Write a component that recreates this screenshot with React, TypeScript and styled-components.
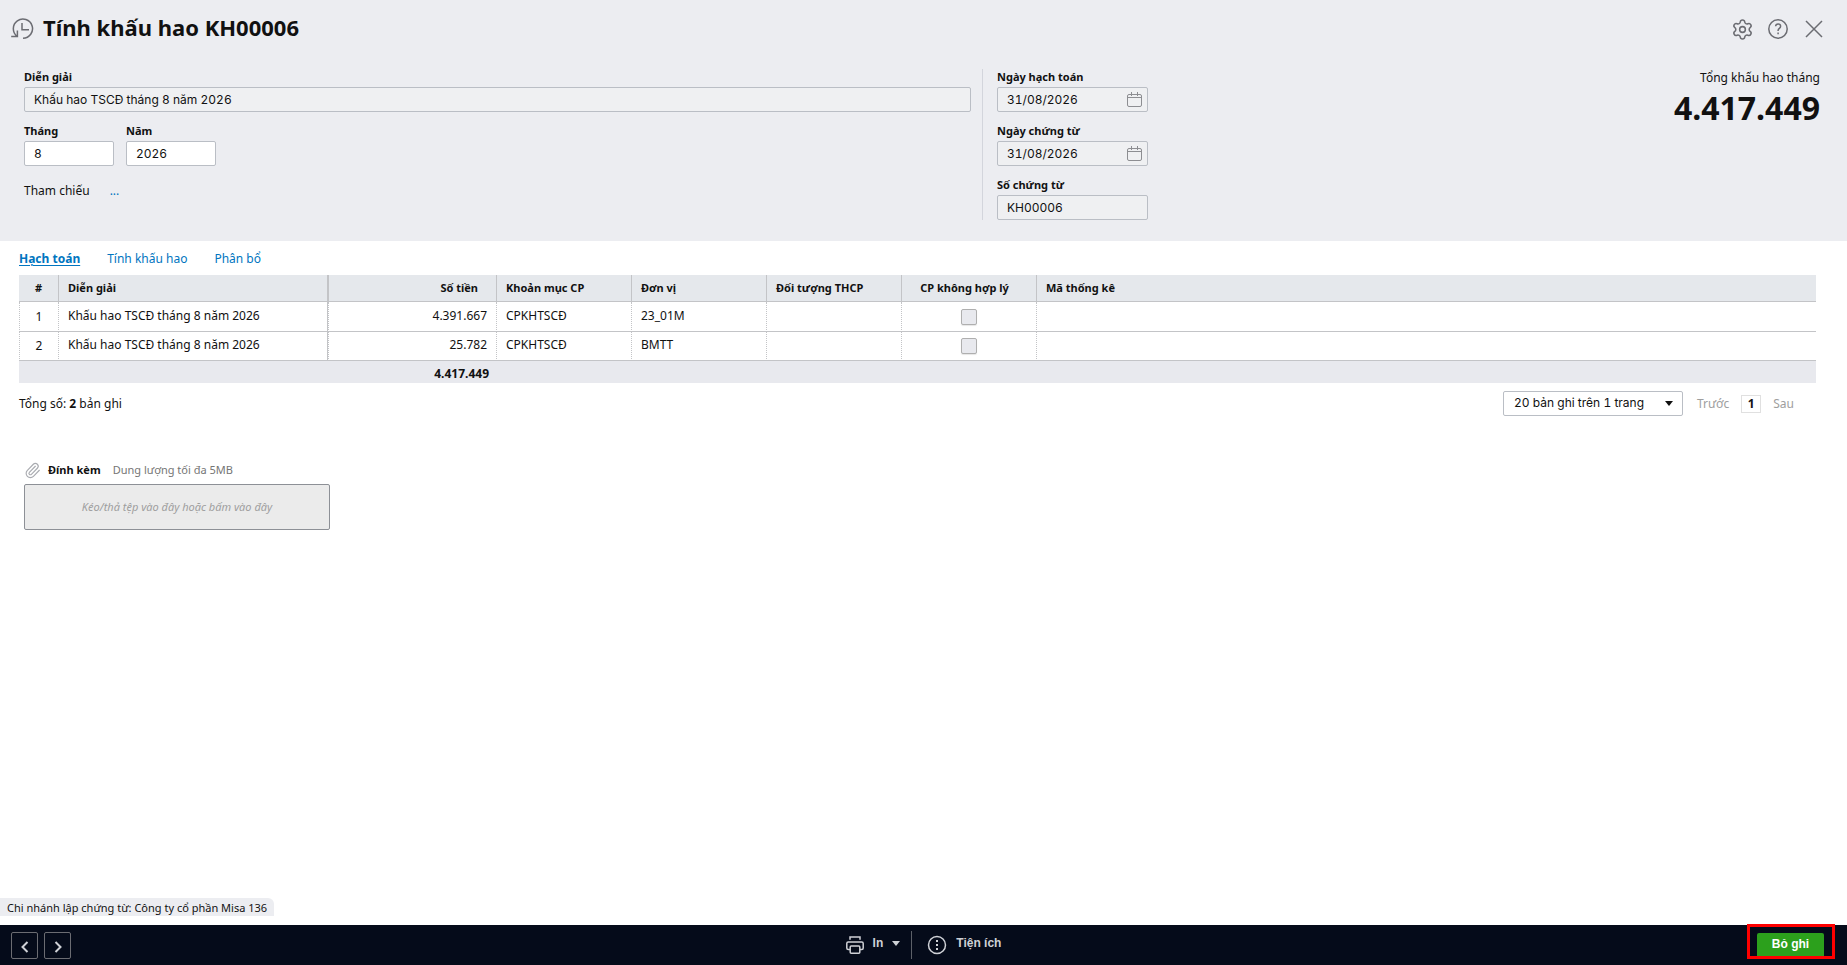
import React from 'react';
import styled, { createGlobalStyle } from 'styled-components';
import { Paperclip, Settings } from 'lucide-react';

const uiFont = '"Noto Sans", sans-serif';
const fieldFont = 'Inter, sans-serif';
const actionFont = '"Liberation Sans", Arial, sans-serif';

const GlobalStyle = createGlobalStyle`
  * { box-sizing: border-box; }
  body { margin: 0; background: #fff; color: #111; font: 12px/16px ${uiFont}; }
  button, input, select { font: inherit; color: inherit; margin: 0; }
  a { color: #0075c0; text-decoration: none; }
`;

const Page = styled.div`
  min-height: 100vh;
  display: flex;
  flex-direction: column;
`;

const Header = styled.header`
  background: #ecedf1;
  padding: 12px 24px 21px 10px;
`;

const TitleBar = styled.div`
  display: flex;
  align-items: center;
  gap: 9px;
  height: 34px;
`;

const Title = styled.h1`
  flex: 1;
  margin: 0 0 4px;
  font-size: 22px;
  line-height: 30px;
  font-weight: 700;
`;

const IconButton = styled.button`
  display: flex;
  align-items: center;
  justify-content: center;
  width: 24px;
  height: 24px;
  padding: 0;
  border: 0;
  background: none;
  color: #6b6c72;
`;

const HeaderActions = styled.div`
  display: flex;
  gap: 12px;
  margin-right: -3px;
`;

const FormArea = styled.div`
  display: flex;
  align-items: stretch;
  margin-top: 23px;
  padding-left: 14px;
`;

const MainFields = styled.div`
  flex: 0 1 947px;
  display: flex;
  flex-direction: column;
  gap: 11px;
`;

const SideFields = styled.div`
  flex: 0 0 166px;
  margin-left: 11px;
  padding-left: 14px;
  border-left: 1px solid #d3d5dc;
  display: flex;
  flex-direction: column;
  gap: 11px;
`;

const FieldRow = styled.div`
  display: flex;
  gap: 12px;
`;

const Field = styled.div<{ $width?: number }>`
  display: flex;
  flex-direction: column;
  width: ${(p) => (p.$width ? `${p.$width}px` : '100%')};
`;

const Label = styled.label`
  padding-bottom: 2px;
  font-size: 11px;
  line-height: 16px;
  font-weight: 700;
`;

const TextInput = styled.input`
  width: 100%;
  height: 25px;
  padding: 0 9px 1px;
  border: 1px solid #babec5;
  border-radius: 2px;
  background: #fff;
  font-family: ${fieldFont};
  font-variant-numeric: tabular-nums;
  outline: 0;

  &:read-only {
    background: #eff0f2;
  }
`;

const DateBox = styled.div`
  position: relative;

  svg {
    position: absolute;
    right: 5px;
    top: 4px;
  }
`;

const ReferenceLine = styled.div`
  display: flex;
  gap: 20px;
  margin-top: 6px;
`;

const Summary = styled.div`
  flex: 1;
  padding: 1px 3px 0 0;
  text-align: right;
`;

const SummaryValue = styled.div`
  margin-top: 6px;
  font-size: 32px;
  line-height: 32px;
  font-weight: 700;
`;

const Content = styled.main`
  flex: 1;
  display: flex;
  flex-direction: column;
  padding: 10px 31px 0 19px;
`;

const Tabs = styled.nav`
  display: flex;
  gap: 27px;
  height: 24px;
`;

const Tab = styled.a<{ $active?: boolean }>`
  font-weight: ${(p) => (p.$active ? 700 : 400)};
  text-decoration: ${(p) => (p.$active ? 'underline' : 'none')};
  text-underline-offset: 2px;
`;

const Table = styled.table`
  width: 100%;
  table-layout: fixed;
  border-collapse: separate;
  border-spacing: 0;
`;

const Col = styled.col<{ $width?: number }>`
  width: ${(p) => (p.$width ? `${p.$width}px` : 'auto')};
`;

type Align = 'left' | 'right' | 'center';

const HeadCell = styled.th<{ $align?: Align; $split?: boolean }>`
  height: 27px;
  padding: ${(p) => (p.$align && p.$align !== 'left' ? '0 18px 0 9px' : '0 9px')};
  background: #e5e8ec;
  border-bottom: 1px solid #c3c4c7;
  border-right: 1px solid #c3c4c7;
  border-left: ${(p) => (p.$split ? '1px solid #c3c4c7' : '0')};
  font-size: 11px;
  line-height: 16px;
  text-align: ${(p) => p.$align ?? 'left'};

  &:first-child { padding: 0; }
  &:last-child { border-right: 0; }
`;

const BodyCell = styled.td<{ $align?: Align; $first?: boolean; $frozen?: boolean; $split?: boolean }>`
  height: 30px;
  padding: ${(p) => (p.$align === 'center' ? '0' : '0 9px 2px')};
  border-bottom: 1px solid #c3c4c7;
  border-right: 1px ${(p) => (p.$frozen ? 'solid' : 'dotted')} #c3c4c7;
  border-left: ${(p) => (p.$split || p.$first ? '1px dotted #c3c4c7' : '0')};
  text-align: ${(p) => p.$align ?? 'left'};

  tr:last-child > & { height: 29px; }
  &:last-child { border-right: 0; }
`;

const FootCell = styled.td`
  height: 22px;
  padding: 4px 8px 0;
  background: #e8e9ee;
  text-align: right;
  font-weight: 700;
`;

const Checkbox = styled.input`
  appearance: none;
  display: block;
  width: 16px;
  height: 16px;
  margin: 0 auto;
  border: 1px solid #afafaf;
  border-radius: 2px;
  background: #e8e9ee;
  box-shadow: 0 1px 1px #e6e6e6;
`;

const Pager = styled.div`
  display: flex;
  align-items: center;
  justify-content: space-between;
  margin-top: 8px;
  padding-right: 22px;
`;

const PagerControls = styled.div`
  display: flex;
  align-items: center;
`;

const SelectBox = styled.div`
  position: relative;
  width: 180px;
  margin-right: 14px;

  svg {
    position: absolute;
    right: 10px;
    top: 10px;
    pointer-events: none;
  }
`;

const Select = styled.select`
  appearance: none;
  width: 100%;
  height: 25px;
  padding: 0 10px 1px;
  border: 1px solid #babec5;
  border-radius: 2px;
  background: #fff;
  font-family: ${fieldFont};
  font-variant-numeric: tabular-nums;
`;

const PageStep = styled.button`
  padding: 0;
  border: 0;
  background: none;
  color: #9e9e9e;
`;

const CurrentPage = styled.button`
  width: 20px;
  height: 18px;
  margin: 0 12px;
  padding: 0;
  border: 1px solid #e0e0e0;
  background: #fff;
  line-height: 16px;
  font-weight: 700;
`;

const Attachment = styled.section`
  margin-top: 45px;
  padding-left: 5px;
`;

const AttachmentHead = styled.div`
  display: flex;
  align-items: center;
  gap: 7px;
  height: 18px;
  font-size: 11px;
  color: #a9abb0;
`;

const AttachmentTitle = styled.strong`
  margin-right: 5px;
  color: #111;
`;

const Muted = styled.span`
  color: #757575;
`;

const DropZone = styled.button`
  display: block;
  width: 306px;
  height: 46px;
  margin-top: 5px;
  padding: 0;
  border: 1px solid #8d9096;
  border-radius: 2px;
  background: #ebebeb;
  color: #9e9e9e;
  font-size: 11px;
  font-style: italic;
`;

const Branch = styled.div`
  align-self: flex-start;
  margin-bottom: 9px;
  padding: 2px 7px 0 7px;
  border-top-right-radius: 6px;
  background: #ecedf1;
  font-size: 11px;
`;

const Toolbar = styled.footer`
  display: grid;
  grid-template-columns: 1fr auto 1fr;
  align-items: center;
  height: 40px;
  padding: 0 11px;
  background: #050b1a;
  color: #cfd1d6;
  font: 700 12px/16px ${actionFont};
`;

const NavButtons = styled.div`
  display: flex;
  gap: 6px;
`;

const NavButton = styled.button`
  display: flex;
  align-items: center;
  justify-content: center;
  width: 27px;
  height: 27px;
  padding: 3px 0 0;
  border: 1px solid #6b6c72;
  border-radius: 2px;
  background: none;
`;

const ToolbarCenter = styled.div`
  display: flex;
  align-items: center;
`;

const ToolButton = styled.button`
  display: flex;
  align-items: center;
  gap: 9px;
  padding: 0;
  border: 0;
  background: none;
`;

const ToolLabel = styled.span`
  display: flex;
  align-items: center;
  gap: 9px;
  margin-bottom: 4px;
`;

const Divider = styled.span`
  width: 1px;
  height: 28px;
  margin: 0 15px 0 11px;
  background: #5c6068;
`;

const PrimaryButton = styled.button`
  position: relative;
  justify-self: end;
  width: 67px;
  height: 26px;
  margin-right: 12px;
  margin-top: 1px;
  padding: 0 0 3px;
  border: 0;
  border-radius: 2px;
  background: #2ca01c;
  color: #fff;

  &::after {
    content: '';
    position: absolute;
    inset: -9px -11px 0 -10px;
    border: 3px solid #f00;
  }
`;

const HistoryIcon = () => (
  <svg width="24" height="24" viewBox="0 0 24 24" fill="none" stroke="#6b6c72" strokeWidth="1.5">
    <path d="M13 21.3A9.6 9.6 0 1 0 7.2 19.4M1.2 19.6H7.4V13.6M12 6v6.7h7" />
  </svg>
);

const HelpIcon = () => (
  <svg width="24" height="24" viewBox="0 0 24 24" fill="none" stroke="currentColor" strokeWidth="1.5">
    <circle cx="12" cy="12" r="9.2" />
    <path d="M9.6 9.2C9.7 7.8 10.7 7 12.1 7c1.4 0 2.5.9 2.5 2.2 0 2.2-2.5 2.1-2.5 4.4v.4M12.1 15.6v1.7" />
  </svg>
);

const CloseIcon = () => (
  <svg width="24" height="24" viewBox="0 0 24 24" fill="none" stroke="currentColor" strokeWidth="1.5">
    <path d="M4 4l16 16M20 4L4 20" />
  </svg>
);

const CalendarIcon = () => (
  <svg width="17" height="17" viewBox="0 0 17 17" fill="none" stroke="#8d8e92">
    <rect x="1.5" y="3.5" width="14" height="12" rx="1.5" />
    <path d="M1.5 6.5h14M5.5 1v4M11.5 1v4" />
  </svg>
);

const Caret = () => (
  <svg width="8" height="5" viewBox="0 0 8 5" fill="currentColor">
    <path d="M0 0h8L4 5z" />
  </svg>
);

const PrinterIcon = () => (
  <svg width="18" height="18" viewBox="0 0 18 18" fill="none" stroke="currentColor" strokeWidth="1.5">
    <path d="M4 3.8V1h10v2.8M4 13.5H2.2Q.8 13.5.8 12V7.5Q.8 6 2.2 6h13.6q1.4 0 1.4 1.5V12q0 1.500-1.400 1.500H14" />
    <rect x="4.200" y="10" width="9.600" height="7.200" rx="1" />
  </svg>
);

const UtilityIcon = () => (
  <svg width="20" height="20" viewBox="0 0 20 20" fill="none" stroke="currentColor" strokeWidth="1.5">
    <circle cx="10" cy="10" r="8.5" />
    <path d="M10 5v2M10 9v2M10 13v2" strokeWidth="2" />
  </svg>
);

const Chevron = ({ back }: { back?: boolean }) => (
  <svg width="8" height="12" viewBox="0 0 8 12" fill="none" stroke="currentColor" strokeWidth="2">
    <path d={back ? 'M6.5 1 1.5 6l5 5' : 'M1.5 1l5 5-5 5'} />
  </svg>
);

const rows = [
  { no: 1, text: 'Khấu hao TSCĐ tháng 8 năm 2026', amount: '4.391.667', item: 'CPKHTSCĐ', unit: '23_01M' },
  { no: 2, text: 'Khấu hao TSCĐ tháng 8 năm 2026', amount: '25.782', item: 'CPKHTSCĐ', unit: 'BMTT' },
];

const dates = [
  { id: 'posting-date', label: 'Ngày hạch toán' },
  { id: 'voucher-date', label: 'Ngày chứng từ' },
];

export default function App() {
  return (
    <Page>
      <GlobalStyle />
      <Header>
        <TitleBar>
          <HistoryIcon />
          <Title>Tính khấu hao KH00006</Title>
          <HeaderActions>
            <IconButton aria-label="Thiết lập"><Settings size={23} strokeWidth={1.6} /></IconButton>
            <IconButton aria-label="Trợ giúp"><HelpIcon /></IconButton>
            <IconButton aria-label="Đóng"><CloseIcon /></IconButton>
          </HeaderActions>
        </TitleBar>
        <FormArea>
          <MainFields>
            <Field>
              <Label htmlFor="description">Diễn giải</Label>
              <TextInput id="description" readOnly defaultValue="Khấu hao TSCĐ tháng 8 năm 2026" />
            </Field>
            <FieldRow>
              <Field $width={90}>
                <Label htmlFor="month">Tháng</Label>
                <TextInput id="month" defaultValue="8" />
              </Field>
              <Field $width={90}>
                <Label htmlFor="year">Năm</Label>
                <TextInput id="year" defaultValue="2026" />
              </Field>
            </FieldRow>
            <ReferenceLine>
              <span>Tham chiếu</span>
              <a href="#reference">...</a>
            </ReferenceLine>
          </MainFields>
          <SideFields>
            {dates.map((d) => (
              <Field key={d.id}>
                <Label htmlFor={d.id}>{d.label}</Label>
                <DateBox>
                  <TextInput id={d.id} readOnly defaultValue="31/08/2026" />
                  <CalendarIcon />
                </DateBox>
              </Field>
            ))}
            <Field>
              <Label htmlFor="voucher-no">Số chứng từ</Label>
              <TextInput id="voucher-no" readOnly defaultValue="KH00006" />
            </Field>
          </SideFields>
          <Summary>
            <div>Tổng khấu hao tháng</div>
            <SummaryValue>4.417.449</SummaryValue>
          </Summary>
        </FormArea>
      </Header>

      <Content>
        <Tabs>
          <Tab href="#posting" $active>Hạch toán</Tab>
          <Tab href="#depreciation">Tính khấu hao</Tab>
          <Tab href="#allocation">Phân bổ</Tab>
        </Tabs>
        <Table>
          <colgroup>
            <Col $width={40} />
            <Col $width={269} />
            <Col $width={169} />
            <Col $width={135} />
            <Col $width={135} />
            <Col $width={135} />
            <Col $width={135} />
            <Col />
          </colgroup>
          <thead>
            <tr>
              <HeadCell $align="center">#</HeadCell>
              <HeadCell>Diễn giải</HeadCell>
              <HeadCell $align="right" $split>Số tiền</HeadCell>
              <HeadCell>Khoản mục CP</HeadCell>
              <HeadCell>Đơn vị</HeadCell>
              <HeadCell>Đối tượng THCP</HeadCell>
              <HeadCell $align="center">CP không hợp lý</HeadCell>
              <HeadCell>Mã thống kê</HeadCell>
            </tr>
          </thead>
          <tbody>
            {rows.map((r) => (
              <tr key={r.no}>
                <BodyCell $align="center" $first>{r.no}</BodyCell>
                <BodyCell $frozen>{r.text}</BodyCell>
                <BodyCell $align="right" $split>{r.amount}</BodyCell>
                <BodyCell>{r.item}</BodyCell>
                <BodyCell>{r.unit}</BodyCell>
                <BodyCell />
                <BodyCell $align="center">
                  <Checkbox type="checkbox" disabled aria-label="CP không hợp lý" />
                </BodyCell>
                <BodyCell />
              </tr>
            ))}
          </tbody>
          <tfoot>
            <tr>
              <FootCell colSpan={3}>4.417.449</FootCell>
              <FootCell colSpan={5} />
            </tr>
          </tfoot>
        </Table>
        <Pager>
          <span>Tổng số: <b>2</b> bản ghi</span>
          <PagerControls>
            <SelectBox>
              <Select aria-label="Số bản ghi trên trang">
                <option>20 bản ghi trên 1 trang</option>
              </Select>
              <Caret />
            </SelectBox>
            <PageStep disabled>Trước</PageStep>
            <CurrentPage>1</CurrentPage>
            <PageStep disabled>Sau</PageStep>
          </PagerControls>
        </Pager>
        <Attachment>
          <AttachmentHead>
            <Paperclip size={17} strokeWidth={1.6} />
            <AttachmentTitle>Đính kèm</AttachmentTitle>
            <Muted>Dung lượng tối đa 5MB</Muted>
          </AttachmentHead>
          <DropZone>Kéo/thả tệp vào đây hoặc bấm vào đây</DropZone>
        </Attachment>
      </Content>

      <Branch>Chi nhánh lập chứng từ: Công ty cổ phần Misa 136</Branch>
      <Toolbar>
        <NavButtons>
          <NavButton aria-label="Chứng từ trước"><Chevron back /></NavButton>
          <NavButton aria-label="Chứng từ sau"><Chevron /></NavButton>
        </NavButtons>
        <ToolbarCenter>
          <ToolButton>
            <PrinterIcon />
            <ToolLabel>In <Caret /></ToolLabel>
          </ToolButton>
          <Divider />
          <ToolButton>
            <UtilityIcon />
            <ToolLabel>Tiện ích</ToolLabel>
          </ToolButton>
        </ToolbarCenter>
        <PrimaryButton>Bỏ ghi</PrimaryButton>
      </Toolbar>
    </Page>
  );
}
